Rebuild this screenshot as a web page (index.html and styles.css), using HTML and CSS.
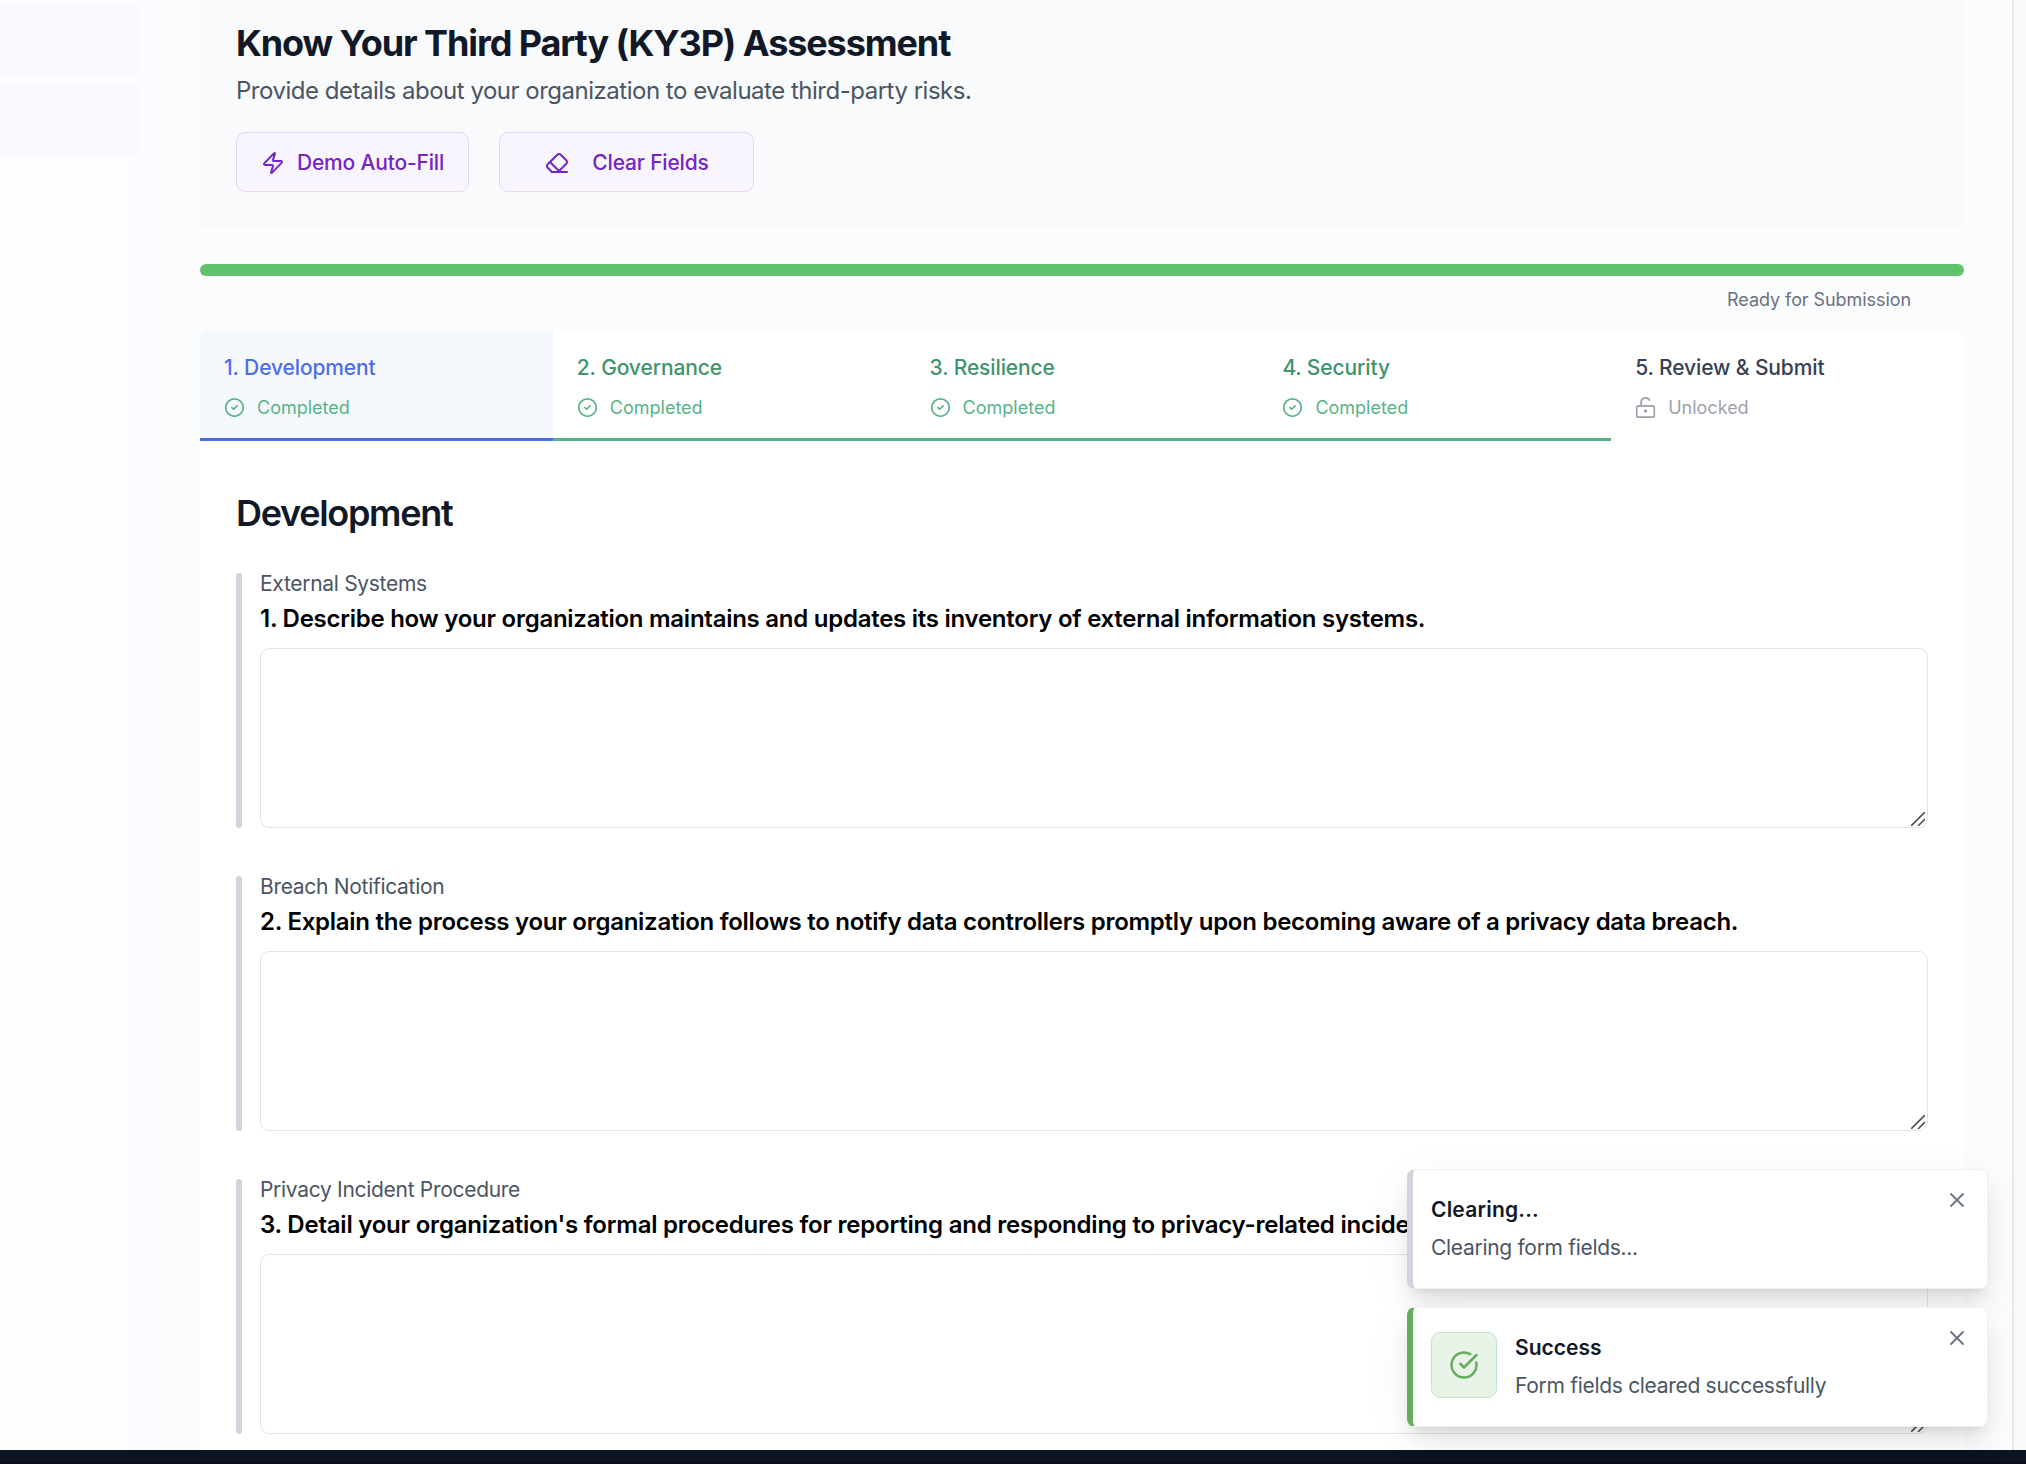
FILE: index.html
```html
<!DOCTYPE html>
<html lang="en">
<head>
<meta charset="utf-8">
<title>KY3P Assessment</title>
<link rel="stylesheet" href="styles.css">
</head>
<body>
<svg class="sprite" aria-hidden="true">
  <symbol id="zap" viewBox="0 0 24 24"><path d="M4 14a1 1 0 0 1-.78-1.63l9.9-10.2a.5.5 0 0 1 .86.46l-1.92 6.02A1 1 0 0 0 13 10h7a1 1 0 0 1 .78 1.63l-9.9 10.2a.5.5 0 0 1-.86-.46l1.92-6.02A1 1 0 0 0 11 14z"/></symbol>
  <symbol id="eraser" viewBox="0 0 24 24"><path d="m7 21-4.3-4.3c-1-1-1-2.5 0-3.4l9.6-9.6c1-1 2.5-1 3.4 0l5.6 5.6c1 1 1 2.5 0 3.4L13 21"/><path d="M22 21H7"/><path d="m5 11 9 9"/></symbol>
  <symbol id="done" viewBox="0 0 24 24"><circle cx="12" cy="12" r="10"/><path d="m9 12 2 2 4-4"/></symbol>
  <symbol id="unlock" viewBox="0 0 24 24"><circle cx="12" cy="16" r="1"/><rect width="20" height="13" x="2" y="10" rx="2"/><path d="M7 10V6a5 5 0 0 1 9.33-2.5"/></symbol>
  <symbol id="success" viewBox="0 0 24 24"><path d="M21.801 10A10 10 0 1 1 17 3.335"/><path d="m9 11 3 3L22 4"/></symbol>
  <symbol id="close" viewBox="0 0 24 24"><path d="M18 6 6 18"/><path d="m6 6 12 12"/></symbol>
</svg>
<div class="app">
  <aside class="sidebar"><div class="nav-item"></div><div class="nav-item"></div></aside>
  <main class="content">
    <header class="intro">
      <h1>Know Your Third Party (KY3P) Assessment</h1>
      <p>Provide details about your organization to evaluate third-party risks.</p>
      <div class="actions">
        <button class="btn btn-fill"><svg class="icon"><use href="#zap"/></svg><span>Demo Auto-Fill</span></button>
        <button class="btn btn-clear"><svg class="icon"><use href="#eraser"/></svg><span>Clear Fields</span></button>
      </div>
    </header>
    <div class="progress"></div>
    <div class="progress-label"><span>Ready for Submission</span></div>
    <section class="card">
      <nav class="tabs">
        <div class="tab active"><span class="name">1. Development</span><span class="state"><svg class="icon"><use href="#done"/></svg><span>Completed</span></span></div>
        <div class="tab complete"><span class="name">2. Governance</span><span class="state"><svg class="icon"><use href="#done"/></svg><span>Completed</span></span></div>
        <div class="tab complete"><span class="name">3. Resilience</span><span class="state"><svg class="icon"><use href="#done"/></svg><span>Completed</span></span></div>
        <div class="tab complete"><span class="name">4. Security</span><span class="state"><svg class="icon"><use href="#done"/></svg><span>Completed</span></span></div>
        <div class="tab open"><span class="name">5. Review &amp; Submit</span><span class="state"><svg class="icon"><use href="#unlock"/></svg><span>Unlocked</span></span></div>
      </nav>
      <div class="form">
        <h2>Development</h2>
        <div class="field">
          <div class="label">External Systems</div>
          <div class="question">1. Describe how your organization maintains and updates its inventory of external information systems.</div>
          <div class="area"><svg class="grip" viewBox="0 0 14 14"><path d="M.5 13.5l13-13M7.500 13.500l6-6"/></svg></div>
        </div>
        <div class="field">
          <div class="label">Breach Notification</div>
          <div class="question">2. Explain the process your organization follows to notify data controllers promptly upon becoming aware of a privacy data breach.</div>
          <div class="area"><svg class="grip" viewBox="0 0 14 14"><path d="M.5 13.5l13-13M7.500 13.500l6-6"/></svg></div>
        </div>
        <div class="field">
          <div class="label">Privacy Incident Procedure</div>
          <div class="question loose">3. Detail your organization's formal procedures for reporting and responding to privacy-related incidents.</div>
          <div class="area"><svg class="grip" viewBox="0 0 14 14"><path d="M.5 13.5l13-13M7.500 13.500l6-6"/></svg></div>
        </div>
      </div>
    </section>
  </main>
  <div class="scrollbar"></div>
</div>
<footer class="bottom"></footer>
<div class="toasts">
  <div class="toast">
    <div><div class="toast-title wide">Clearing...</div><div class="toast-text">Clearing form fields...</div></div>
    <svg class="close"><use href="#close"/></svg>
  </div>
  <div class="toast toast-success">
    <div class="badge"><svg><use href="#success"/></svg></div>
    <div><div class="toast-title">Success</div><div class="toast-text">Form fields cleared successfully</div></div>
    <svg class="close"><use href="#close"/></svg>
  </div>
</div>
</body>
</html>
```
FILE: styles.css
```css
* { box-sizing: border-box; }
body { margin: 0; height: 1464px; overflow: hidden; font-family: Inter, "Liberation Sans", sans-serif; background: #fbfcfe; color: #111827; position: relative; }
h1, h2, p { margin: 0; }
svg { fill: none; stroke: currentColor; stroke-width: 2; stroke-linecap: round; stroke-linejoin: round; flex: none; }
.sprite { display: none; }
.app { display: flex; height: 1450px; overflow: hidden; }
.sidebar { width: 152px; flex: none; padding-top: 5px; background: linear-gradient(90deg, #fcfdff 0 133px, #fbfcff 133px 151px, #fafafe 151px); display: flex; flex-direction: column; gap: 6px; }
.nav-item { width: 140px; height: 72px; flex: none; background: #f9fafe; border-radius: 0 10px 10px 0; }
.content { flex: 1; min-width: 0; padding: 0 48px; display: flex; flex-direction: column; }
.scrollbar { width: 14px; flex: none; background: #fafafa; border-left: 2px solid #e7e7e9; }

.intro { height: 228px; flex: none; padding: 18px 36px 0; background: #f9fafc; }
h1 { font-size: 36px; line-height: 50px; font-weight: 700; letter-spacing: -1.1px; white-space: nowrap; }
.intro p { margin-top: 5px; font-size: 24px; line-height: 36px; letter-spacing: -0.49px; color: #4b5563; white-space: nowrap; }
.actions { display: flex; gap: 30px; margin-top: 23px; }
.btn { height: 60px; display: flex; align-items: center; justify-content: center; padding: 1px 0 0; border: 1px solid #e6d5fb; border-radius: 9px; background: #f9f5fe; color: #7326c4; font: 500 21px/30px Inter, sans-serif; letter-spacing: -0.18px; white-space: nowrap; }
.btn .icon { width: 24px; height: 24px; }
.btn-fill { width: 233px; gap: 12px; }
.btn-clear { width: 255px; gap: 23px; padding-left: 1px; }

.progress { height: 12px; flex: none; margin-top: 36px; border-radius: 6px; background: #60c26a; }
.progress-label { height: 54px; flex: none; padding: 10px 53px 0 0; text-align: right; font-size: 18px; line-height: 27px; letter-spacing: -0.07px; color: #6b7280; }

.card { flex: none; background: #fff; border-radius: 9px 9px 0 0; height: 1130px; }
.tabs { display: grid; grid-template-columns: repeat(5, 1fr); height: 111px; }
.tab { padding: 23px 24px 0; border-bottom: 3px solid transparent; display: flex; flex-direction: column; gap: 11px; white-space: nowrap; }
.name { font-size: 21px; line-height: 30px; font-weight: 500; letter-spacing: -0.12px; }
.state { display: flex; align-items: center; gap: 12px; font-size: 18px; line-height: 27px; color: #58b487; }
.state .icon { width: 21px; height: 21px; }
.active { background: #f5f9fe; border-color: #4f6de3; color: #4f6de3; border-top-left-radius: 9px; }
.complete { border-color: #53b385; color: #41946c; }
.open { color: #374151; }
.open .state { color: #9ca3af; }

.form { padding: 48px 36px 0; }
h2 { font-size: 36px; line-height: 48px; font-weight: 600; letter-spacing: -1.3px; }
.field { position: relative; height: 255px; margin-bottom: 48px; padding-left: 24px; }
h2 + .field { margin-top: 36px; }
.field::before { content: ""; position: absolute; left: 0; top: 0; width: 6px; height: 100%; border-radius: 3px; background: #d1d5db; }
.label { font-size: 21px; line-height: 22px; letter-spacing: -0.3px; color: #4b5563; }
.question { margin-top: 6px; height: 47px; font-size: 24px; line-height: 36px; font-weight: 600; letter-spacing: -0.26px; color: #000; white-space: nowrap; }
.loose { letter-spacing: -0.22px; }
.area { height: 180px; border: 1px solid #e2e5ee; border-radius: 9px; background: #fff; display: flex; justify-content: flex-end; align-items: flex-end; padding: 0 2px 1px 0; }
.grip { width: 14px; height: 14px; stroke: #555; stroke-width: 1.7; }

.bottom { height: 14px; background: #0d1421; border-bottom: 2px solid #10051a; }

.toasts { position: absolute; left: 1407px; top: 1169px; width: 581px; display: flex; flex-direction: column; gap: 18px; }
.toast { position: relative; height: 120px; border: 1px solid #f0f1f3; border-left: 6px solid #d1d5db; border-radius: 8px; background: #fff; padding: 24px 18px 0; display: flex; gap: 18px; box-shadow: 0 15px 22px -4px rgba(0,0,0,.1), 0 6px 9px -6px rgba(0,0,0,.1), 0 10px 50px rgba(0,0,0,.05); white-space: nowrap; }
.toast-success { border-left-color: #66ad5d; }
.toast-title { font-size: 21px; line-height: 32px; font-weight: 600; }
.wide { letter-spacing: 0.2px; }
.toast-text { margin-top: 6px; font-size: 21px; line-height: 32px; letter-spacing: -0.3px; color: #4b5563; }
.badge { width: 66px; height: 66px; display: flex; align-items: center; justify-content: center; border: 1px solid #c5e3c5; border-radius: 9px; background: #e9f4e9; color: #66ad5d; }
.badge svg { width: 30px; height: 30px; }
.close { position: absolute; right: 18px; top: 18px; width: 24px; height: 24px; color: #6b7280; stroke-width: 1.8; }
```
